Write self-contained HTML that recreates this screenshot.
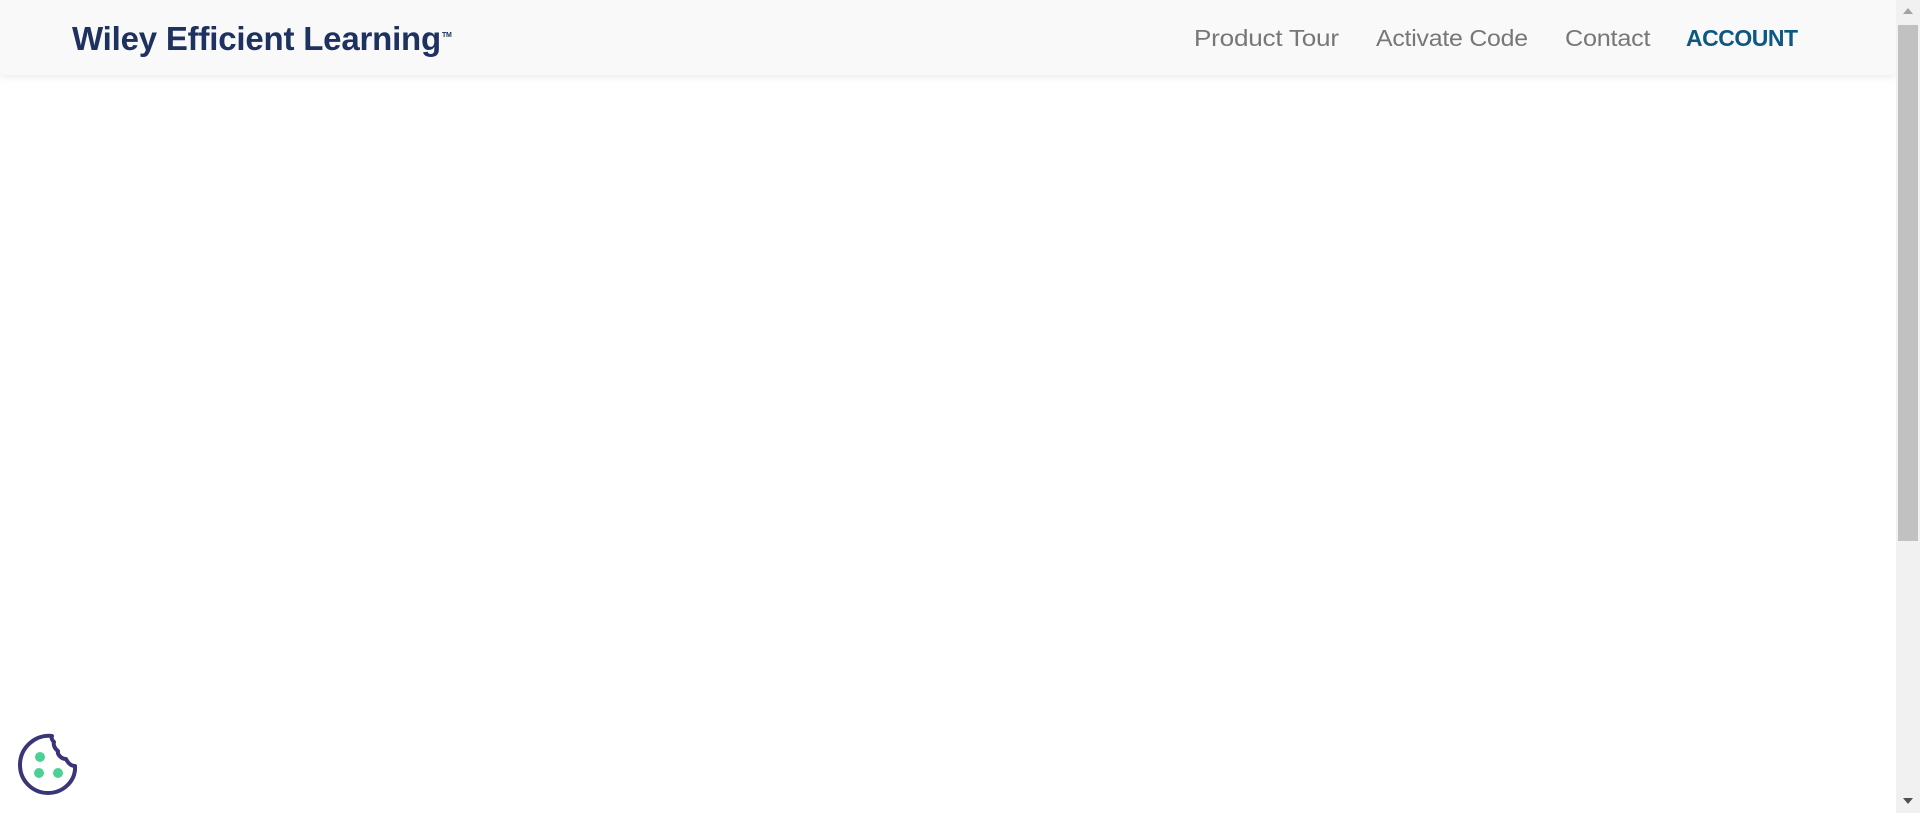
<!DOCTYPE html>
<html><head><meta charset="utf-8"><style>
body{margin:0;width:1920px;height:813px;overflow:hidden;background:#fff;font-family:"Liberation Sans",sans-serif;position:relative}
.hdr{position:absolute;left:0;top:0;width:1896px;height:75px;background:#f9f9f9;box-shadow:0 2px 8px rgba(0,0,0,0.08)}
.logo{position:absolute;left:72px;top:20px;font-size:33px;font-weight:bold;color:#1d3260;letter-spacing:-0.2px}
.logo sup{font-size:7px;vertical-align:top;position:relative;top:12px;margin-left:1px}
.nav{position:absolute;top:25px;font-size:23px;color:#777;letter-spacing:-0.2px;transform-origin:left center;white-space:nowrap}
.sb{position:absolute;right:0;top:0;width:24px;height:813px;background:#f1f1f1}
.th{position:absolute;left:2px;top:25px;width:20px;height:516px;background:#c1c1c1}
</style></head><body>
<div class="hdr">
<div class="logo">Wiley Efficient Learning<sup>TM</sup></div>
<div class="nav" style="left:1194px;transform:scaleX(1.135)">Product Tour</div>
<div class="nav" style="left:1376px;transform:scaleX(1.08)">Activate Code</div>
<div class="nav" style="left:1565px;transform:scaleX(1.095)">Contact</div>
<div class="nav" style="left:1686px;color:#0d5785;font-weight:bold;letter-spacing:-0.5px">ACCOUNT</div>
</div>
<div class="sb"><div class="th"></div>
<svg style="position:absolute;left:7px;top:8px" width="10" height="6"><path d="M0 6L5 0L10 6Z" fill="#a3a3a3"/></svg>
<svg style="position:absolute;left:7px;top:798px" width="10" height="6"><path d="M0 0L5 6L10 0Z" fill="#505050"/></svg>
</div>
<svg style="position:absolute;left:16px;top:733px" width="64" height="64" viewBox="0 0 64 64">
<path d="M36 3 C20 1 4 14 4 32 C4 48 17 60 32 60 C47 60 60 48 59 33 C55 33 52 30 50 26 C46 26 41 22 42 18 C39 16 37 12 38 9 C36 7 35 5 36 3 Z" fill="none" stroke="#3a3577" stroke-width="4" stroke-linejoin="round"/>
<circle cx="24" cy="24" r="5" fill="#4bd194"/><circle cx="23" cy="40" r="5" fill="#4bd194"/><circle cx="42" cy="40" r="5" fill="#4bd194"/>
</svg>
</body></html>
